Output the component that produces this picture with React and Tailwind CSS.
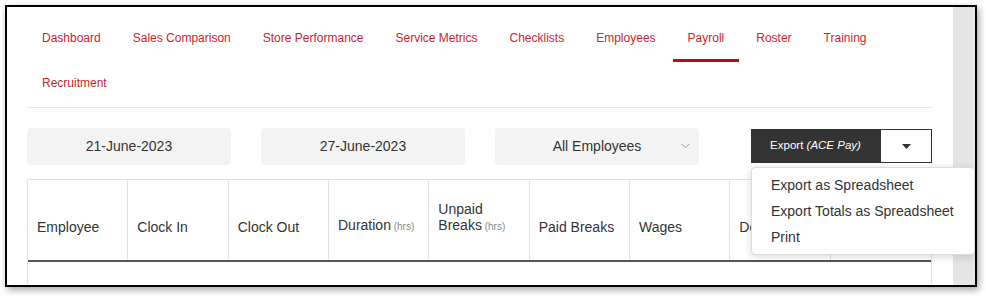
import { useState } from "react";

const tabs = [
  "Dashboard",
  "Sales Comparison",
  "Store Performance",
  "Service Metrics",
  "Checklists",
  "Employees",
  "Payroll",
  "Roster",
  "Training",
  "Recruitment",
];

const columns = [
  { label: "Employee" },
  { label: "Clock In" },
  { label: "Clock Out" },
  { label: "Duration", unit: "(hrs)" },
  { label: "Unpaid Breaks", unit: "(hrs)", wrap: true },
  { label: "Paid Breaks" },
  { label: "Wages" },
  { label: "Deductions" },
  { label: "Notes" },
];

function App() {
  const [active] = useState("Payroll");

  return (
    <div
      className="w-[986px] h-[296px] bg-white pl-[5px] pt-[5px]"
      style={{ fontFamily: '"Liberation Sans", Arial, sans-serif' }}
    >
      <div className="w-[972px] h-[282px] border-2 border-black flex overflow-hidden shadow-[2px_3px_7px_rgba(0,0,0,0.35)]">
        {/* Main */}
        <div className="flex-1 bg-white pl-5 pr-[21px] pt-[10px] relative">
          {/* Tabs */}
          <nav className="flex flex-wrap gap-x-[2px] border-b border-[#e6e6e6]">
            {tabs.map((t) => (
              <div
                key={t}
                className={`h-[45px] px-[15px] flex items-center text-[12px] text-[#c9252c] border-b-[3px] ${
                  active === t ? "border-[#b80d12]" : "border-transparent"
                }`}
              >
                {t}
              </div>
            ))}
          </nav>

          {/* Filters */}
          <div className="flex items-start mt-5">
            <div className="w-[204px] h-[37px] rounded bg-[#f3f3f3] flex items-center justify-center text-[14px] text-[#333]">
              21-June-2023
            </div>
            <div className="w-[204px] h-[37px] rounded bg-[#f3f3f3] flex items-center justify-center text-[14px] text-[#333] ml-[30px]">
              27-June-2023
            </div>
            <div className="w-[204px] h-[37px] rounded bg-[#f3f3f3] flex items-center text-[14px] text-[#333] ml-[30px] relative">
              <span className="flex-1 text-center">All Employees</span>
              <svg
                className="absolute right-[9px] top-[15px]"
                width="9"
                height="6"
                viewBox="0 0 9 6"
                fill="none"
                stroke="#9a9a9a"
                strokeWidth="1"
              >
                <path d="M0.5 0.8 L4.5 4.8 L8.5 0.8" />
              </svg>
            </div>

            <div className="ml-auto mt-px relative">
              <div className="flex h-[34px] w-[181px]">
                <div className="w-[129px] bg-[#333] text-white text-[11.5px] flex items-center justify-center">
                  Export&nbsp;<i>(ACE Pay)</i>
                </div>
                <div className="flex-1 border border-[#333] bg-white flex items-center justify-center">
                  <svg width="9" height="5" viewBox="0 0 9 5">
                    <path d="M0 0 L9 0 L4.5 5 Z" fill="#333" />
                  </svg>
                </div>
              </div>

              {/* Dropdown */}
              <div className="absolute left-0 top-[38px] w-[224px] bg-white border border-[#dcdcdc] rounded shadow-[0_2px_8px_rgba(0,0,0,0.15)] py-1 z-10">
                {["Export as Spreadsheet", "Export Totals as Spreadsheet", "Print"].map((m) => (
                  <div key={m} className="h-[26px] leading-[26px] px-[19px] text-[14px] text-[#333] whitespace-nowrap">
                    {m}
                  </div>
                ))}
              </div>
            </div>
          </div>

          {/* Table */}
          <div className="mt-[14px] border-t border-x border-[#e2e2e2]">
            <div className="grid grid-cols-9 h-[82px] border-b-2 border-[#555]">
              {columns.map((c, i) => (
                <div
                  key={c.label}
                  className={`flex items-end pb-[25px] pl-[9px] pr-1 text-[14px] leading-4 text-[#333] ${
                    i < columns.length - 1 ? "border-r border-[#e2e2e2]" : ""
                  }`}
                >
                  <div className={c.wrap ? "w-[70px]" : "whitespace-nowrap"}>
                    {c.label}
                    {c.unit && <span className="text-[10px] text-[#888]"> {c.unit}</span>}
                  </div>
                </div>
              ))}
            </div>
            <div className="h-[40px]"></div>
          </div>
        </div>

        {/* Scrollbar gutter */}
        <div className="w-[22px] bg-[#e5e5e5]"></div>
      </div>
    </div>
  );
}

export default App;
